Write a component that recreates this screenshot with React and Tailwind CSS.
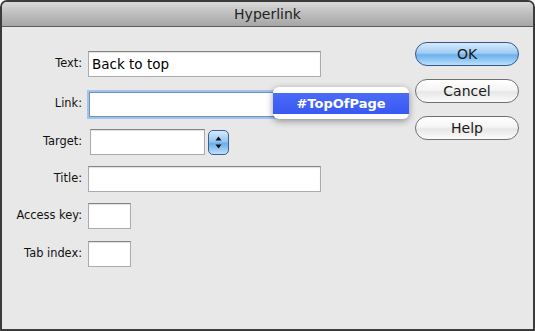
import React from 'react';

const fieldBase =
  'h-[26px] bg-white border border-[#ababab] border-t-[#848484] shadow-[inset_0_1px_1px_rgba(0,0,0,0.12)] px-[3px] flex items-center text-[13.5px] text-black';

const Label = ({ children }) => (
  <div className="w-[81px] text-right text-[11.4px] text-[#111] pr-[1px]">{children}</div>
);

const Row = ({ label, children, className = '' }) => (
  <div className={'flex items-center h-[26px] gap-[5px] ' + className}>
    <Label>{label}</Label>
    {children}
  </div>
);

const Stepper = () => (
  <div className="w-[21px] h-[25px] rounded-[5px] border border-[#3e5e8c] bg-[linear-gradient(to_bottom,#d6eafc_0%,#97c6f1_45%,#6aaeea_55%,#bfe0fb_100%)] flex items-center justify-center">
    <svg width="9" height="15" viewBox="0 0 9 15">
      <polygon points="4.5,1.5 7.5,5.5 1.5,5.5" fill="#111" />
      <polygon points="4.5,13.5 7.5,9.5 1.5,9.5" fill="#111" />
    </svg>
  </div>
);

const PillButton = ({ children, primary }) => (
  <div
    className={
      'w-[104px] h-[24px] rounded-full border flex items-center justify-center text-[14px] text-[#1a1a1a] ' +
      (primary
        ? 'border-[#32578a] bg-[linear-gradient(to_bottom,#d6eafc_0%,#a2cdf3_45%,#6cb1ee_55%,#b9dffd_100%)]'
        : 'border-[#707070] bg-[linear-gradient(to_bottom,#ffffff_0%,#f5f5f5_45%,#e7e7e7_55%,#fbfbfb_100%)]')
    }
  >
    {children}
  </div>
);

export default function App() {
  return (
    <div className="w-[535px] h-[331px] flex flex-col bg-[#e8e8e8] border-2 border-[#3b3b3b] rounded-t-[7px] overflow-hidden font-['DejaVu_Sans',sans-serif]">
      {/* Title bar */}
      <div className="h-[25px] shrink-0 flex items-center justify-center border-b border-[#5c5c5c] bg-[linear-gradient(to_bottom,#d9d9d9_0%,#bdbdbd_50%,#a6a6a6_100%)] text-[14px] text-[#222]">
        Hyperlink
      </div>

      {/* Body */}
      <div className="relative flex-1 flex">
        <div className="flex flex-col pt-[24px]">
          <Row label="Text:">
            <div className={fieldBase + ' w-[233px]'}>Back to top</div>
          </Row>
          <Row label="Link:" className="mt-[14px]">
            <div className="w-[231px] h-[25px] ml-[1px] bg-white border border-[#6a90c4] shadow-[0_0_0_2px_#a3c3ea]" />
          </Row>
          <Row label="Target:" className="mt-[12px]">
            <div className="flex items-center gap-[3px] ml-[2px]">
              <div className={fieldBase + ' w-[115px]'} />
              <Stepper />
            </div>
          </Row>
          <Row label="Title:" className="mt-[11px]">
            <div className={fieldBase + ' w-[233px] h-[25px]'} />
          </Row>
          <Row label="Access key:" className="mt-[11px]">
            <div className={fieldBase + ' w-[43px] h-[25px]'} />
          </Row>
          <Row label="Tab index:" className="mt-[12px]">
            <div className={fieldBase + ' w-[43px] h-[25px]'} />
          </Row>
        </div>

        <div className="ml-auto pr-[14px] pt-[15px] flex flex-col gap-[13px]">
          <PillButton primary>OK</PillButton>
          <PillButton>Cancel</PillButton>
          <PillButton>Help</PillButton>
        </div>

        {/* Autocomplete popup */}
        <div className="absolute left-[271px] top-[60px] w-[136px] h-[32px] bg-white rounded-[6px] shadow-[0_2px_7px_rgba(0,0,0,0.4)] pt-[6px]">
          <div className="h-[21px] bg-[linear-gradient(to_bottom,#4b6bf7_0%,#3858f3_100%)] flex items-center justify-center text-white font-bold text-[13px]">
            #TopOfPage
          </div>
        </div>
      </div>
    </div>
  );
}
